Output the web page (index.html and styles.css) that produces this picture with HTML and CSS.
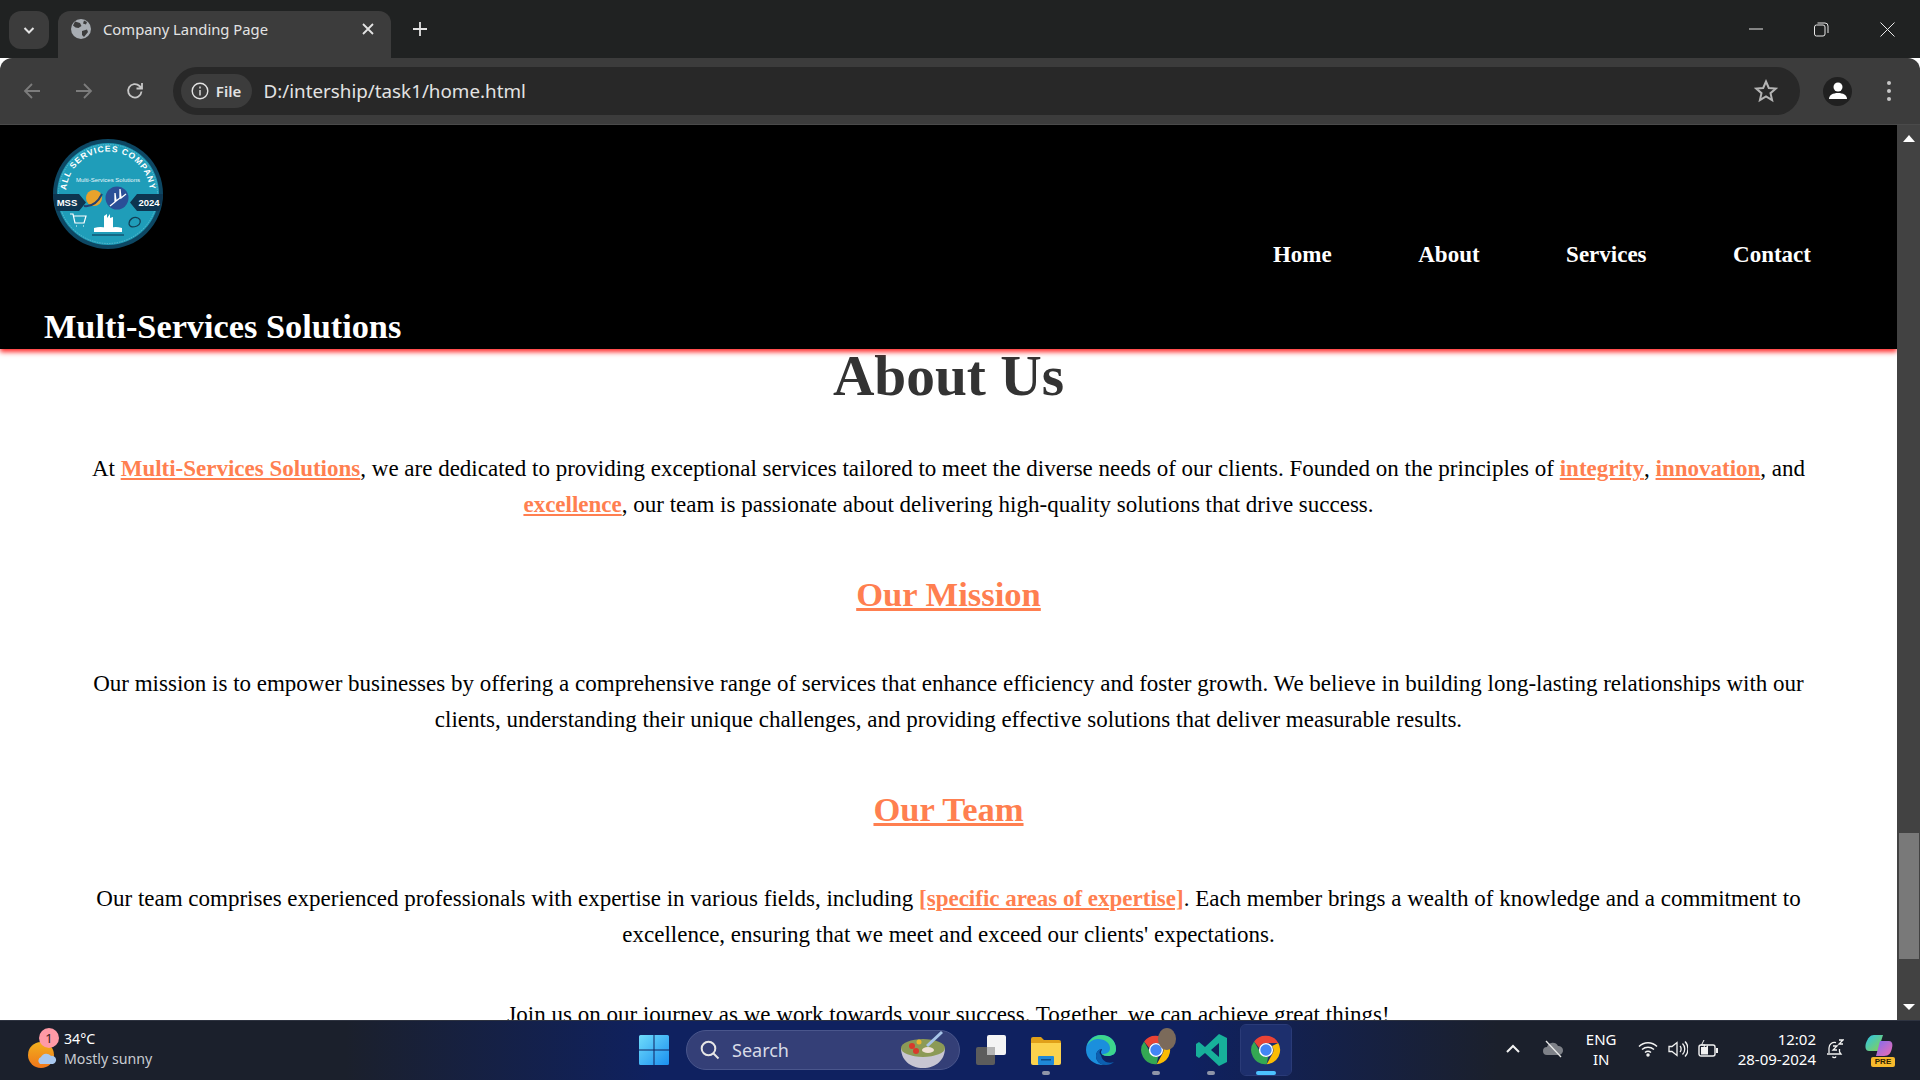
FILE: index.html
```html
<!DOCTYPE html>
<html lang="en">
<head>
  <meta charset="UTF-8">
  <title>Company Landing Page</title>
  <link rel="stylesheet" href="styles.css">
</head>
<body>
  <svg class="defs" width="0" height="0">
    <symbol id="chrome" viewBox="0 0 48 48">
      <path d="M24 4a20 20 0 0 1 17.300 10H24a10 10 0 0 0-9.600 7.200L7.200 12A20 20 0 0 1 24 4z" fill="#ea4335"/>
      <path d="M41.300 14A20 20 0 0 1 25 44l8.300-15A10 10 0 0 0 32.500 18.500z" fill="#fbbc04"/>
      <path d="M7.200 12l8.600 15A10 10 0 0 0 27 33.500L25 44A20 20 0 0 1 7.200 12z" fill="#34a853"/>
      <circle cx="24" cy="24" r="10" fill="#fff"/>
      <circle cx="24" cy="24" r="8" fill="#4285f4"/>
    </symbol>
  </svg>

  <div class="tabstrip">
    <button class="tab-search">
      <svg width="14" height="14" viewBox="0 0 14 14"><path d="M2.500 5l4.500 4.500L11.500 5" fill="none" stroke="#e3e3e3" stroke-width="2"/></svg>
    </button>
    <div class="tab">
      <svg class="tab-globe" width="22" height="22" viewBox="0 0 22 22">
        <circle cx="11" cy="11" r="10" fill="#a8adb3"/>
        <path d="M5 3.500l5 1.500 1.500 3-3 2-3-.5-2.500-2zM12 13l5-1.500 1 2.500-4 5-2-2zM14 2.500l3 1.500-1 2.500-3-1z" fill="#3c3c3c"/>
      </svg>
      <span class="tab-title">Company Landing Page</span>
      <svg class="tab-close" width="12" height="12" viewBox="0 0 12 12"><path d="M1 1l10 10M11 1L1 11" stroke="#e3e3e3" stroke-width="1.800"/></svg>
    </div>
    <svg class="new-tab" width="16" height="16" viewBox="0 0 16 16"><path d="M8 1v14M1 8h14" stroke="#e3e3e3" stroke-width="1.800"/></svg>
    <div class="window-btns">
      <svg width="14" height="14" viewBox="0 0 14 14"><path d="M0 7h14" stroke="#e8e8e8" stroke-width="1"/></svg>
      <svg width="15" height="15" viewBox="0 0 15 15" fill="none" stroke="#e8e8e8"><rect x=".5" y="3" width="10.500" height="11" rx="2"/><path d="M3.500 1h7.500a3 3 0 0 1 3 3v7"/></svg>
      <svg width="15" height="15" viewBox="0 0 15 15"><path d="M.5.500l14 14M14.500.500l-14 14" stroke="#e8e8e8"/></svg>
    </div>
  </div>

  <div class="toolbar">
    <svg width="20" height="20" viewBox="0 0 20 20" fill="none" stroke="#7c7c7c" stroke-width="1.800"><path d="M18 10H3M10 3l-7 7 7 7"/></svg>
    <svg width="20" height="20" viewBox="0 0 20 20" fill="none" stroke="#7c7c7c" stroke-width="1.800"><path d="M2 10h15M10 3l7 7-7 7"/></svg>
    <svg width="20" height="20" viewBox="0 0 20 20" fill="none" stroke="#c7c7c7" stroke-width="1.800"><path d="M16.500 10.500a6.700 6.700 0 1 1-2-5.500l2.500 2.500M17 2v5.500h-5.500"/></svg>
    <div class="omnibox">
      <div class="site-chip">
        <svg width="18" height="18" viewBox="0 0 18 18" fill="none" stroke="#e3e3e3" stroke-width="1.400"><circle cx="9" cy="9" r="7.800"/><path d="M9 8v5.500M9 4.500v2"/></svg>
        <span>File</span>
      </div>
      <span class="url">D:/intership/task1/home.html</span>
      <svg class="star" width="24" height="24" viewBox="0 0 24 24"><path d="M12 2.500l2.800 6.500 7 .6-5.300 4.600 1.600 6.900-6.100-3.700-6.100 3.700 1.600-6.900L2.200 9.600l7-.6z" fill="none" stroke="#b4b4b4" stroke-width="2"/></svg>
    </div>
    <div class="avatar">
      <svg width="20" height="20" viewBox="0 0 20 20" fill="#fff"><circle cx="10" cy="6" r="4.500"/><path d="M1 18c0-4 4-6 9-6s9 2 9 6z"/></svg>
    </div>
    <div class="kebab"><i></i><i></i><i></i></div>
  </div>

  <div class="viewport">
    <div class="page">
      <header class="site-header">
        <div class="brand">
          <svg class="logo" width="112" height="112" viewBox="0 0 112 112">
            <defs><path id="logo-arc" d="M15.300 66A42 42 0 1 1 96.700 66"/></defs>
            <circle cx="56" cy="56" r="55" fill="#0d4763"/>
            <circle cx="56" cy="56" r="51" fill="#1f9db9"/>
            <circle cx="56" cy="56" r="49.500" fill="none" stroke="#8fd0df" stroke-width=".5" stroke-dasharray="1.500 1"/>
            <text class="logo-arc-text"><textPath href="#logo-arc" startOffset="50%" text-anchor="middle">ALL SERVICES COMPANY</textPath></text>
            <text class="logo-small" x="56" y="44" text-anchor="middle">Multi-Services Solutions</text>
            <path d="M1 56h26l7 8.500-7 8.500H5a55 55 0 0 1-4-17zM111 56H85l-7 8.500 7 8.500h22a55 55 0 0 0 4-17z" fill="#0d3550"/>
            <text class="logo-tag" x="15" y="68" text-anchor="middle">MSS</text>
            <text class="logo-tag" x="97" y="68" text-anchor="middle">2024</text>
            <circle cx="42" cy="60" r="8" fill="#e9a22b"/>
            <path d="M32 68c8 1 14-4 18-12" fill="none" stroke="#25406e" stroke-width="2"/>
            <circle cx="65" cy="60" r="11.500" fill="#2a4f97"/>
            <path d="M58 68l5-4V55l1 8 4-3V51l1 9 5-4" fill="none" stroke="#fff" stroke-width="1.300"/>
            <path d="M18 76h3l2 9h9l2-7H22M24 88h1M31 88h1" fill="none" stroke="#fff" stroke-width="1.200"/>
            <path d="M52 92V78l3-2v4l3-4v4l3-1v13zM42 90c6-2 12-1 14 1 3-2 8-3 14-1v4H42z" fill="#fff"/>
            <path d="M40 97h32" stroke="#0d3550"/>
            <path d="M77 86c0-5 5-8 9-6 4 2 2 7-1 8s-7 2-8-2z" fill="none" stroke="#123f55" stroke-width="1.200"/>
          </svg>
          <div class="brand-name">Multi-Services Solutions</div>
        </div>
        <nav class="site-nav">
          <a href="#">Home</a>
          <a href="#">About</a>
          <a href="#">Services</a>
          <a href="#">Contact</a>
        </nav>
      </header>

      <main class="about">
        <h1>About Us</h1>
        <p>At <a href="#">Multi-Services Solutions</a>, we are dedicated to providing exceptional services tailored to meet the diverse needs of our clients. Founded on the principles of <a href="#">integrity</a>, <a href="#">innovation</a>, and <a href="#">excellence</a>, our team is passionate about delivering high-quality solutions that drive success.</p>
        <h2><a href="#">Our Mission</a></h2>
        <p>Our mission is to empower businesses by offering a comprehensive range of services that enhance efficiency and foster growth. We believe in building long-lasting relationships with our clients, understanding their unique challenges, and providing effective solutions that deliver measurable results.</p>
        <h2><a href="#">Our Team</a></h2>
        <p>Our team comprises experienced professionals with expertise in various fields, including <a href="#">[specific areas of expertise]</a>. Each member brings a wealth of knowledge and a commitment to excellence, ensuring that we meet and exceed our clients' expectations.</p>
        <p>Join us on our journey as we work towards your success. Together, we can achieve great things!</p>
      </main>
    </div>

    <div class="scrollbar">
      <svg width="14" height="8" viewBox="0 0 14 8"><path d="M7 0l6 7H1z" fill="#fff"/></svg>
      <div class="scroll-track"><div class="scroll-thumb"></div></div>
      <svg width="14" height="8" viewBox="0 0 14 8"><path d="M1 1h12L7 7z" fill="#fff"/></svg>
    </div>
  </div>

  <div class="taskbar">
    <div class="weather">
      <div class="weather-icon">
        <svg width="32" height="32" viewBox="0 0 32 32">
          <defs><linearGradient id="sun" x1="0" y1="0" x2="0" y2="1"><stop offset="0" stop-color="#f2b01e"/><stop offset="1" stop-color="#f0761a"/></linearGradient></defs>
          <circle cx="14" cy="18" r="13" fill="url(#sun)"/>
          <path d="M13 27a4 4 0 0 1 1-7 6 6 0 0 1 10-1 4 4 0 0 1 2 8z" fill="#a9c8ef"/>
        </svg>
        <span class="weather-badge">1</span>
      </div>
      <div class="weather-text">
        <span class="temp">34°C</span>
        <span class="cond">Mostly sunny</span>
      </div>
    </div>

    <div class="task-center">
      <svg class="win" width="30" height="30" viewBox="0 0 30 30">
        <defs><linearGradient id="win" x1="0" y1="0" x2="1" y2="1"><stop offset="0" stop-color="#6fdcfb"/><stop offset="1" stop-color="#1a8fef"/></linearGradient></defs>
        <path d="M0 1.500A1.500 1.500 0 0 1 1.500 0h13v14.500H0zM15.500 0h13A1.500 1.500 0 0 1 30 1.500v13H15.500zM0 15.500h14.500V30h-13A1.500 1.500 0 0 1 0 28.500zM15.500 15.500H30v13a1.500 1.500 0 0 1-1.500 1.500h-13z" fill="url(#win)"/>
      </svg>
      <div class="task-search">
        <svg width="20" height="20" viewBox="0 0 20 20" fill="none" stroke="#e6e6e6" stroke-width="2"><circle cx="8.500" cy="8.500" r="6.800"/><path d="M13.500 13.500l5 5"/></svg>
        <span>Search</span>
        <svg class="bowl" width="46" height="40" viewBox="0 0 46 40">
          <path d="M1 18h44c0 12-9 20-22 20S1 30 1 18z" fill="#c8c6d2"/>
          <ellipse cx="23" cy="18" rx="22" ry="9" fill="#8c9a56"/>
          <circle cx="12" cy="16" r="3" fill="#d8392b"/><circle cx="19" cy="12" r="2.500" fill="#e8b530"/><circle cx="16" cy="21" r="3" fill="#d8392b"/><ellipse cx="28" cy="20" rx="6" ry="3" fill="#eedfd3"/>
          <path d="M27 16L42 2" stroke="#a8c4e8" stroke-width="3"/>
        </svg>
      </div>
      <div class="task-slot">
        <svg width="32" height="32" viewBox="0 0 32 32">
          <rect x="1" y="13" width="19" height="18" rx="2" fill="#5c5c5c"/>
          <rect x="12" y="1" width="19" height="20" rx="2" fill="#f4f4f4"/>
          <rect x="12" y="13" width="8" height="8" fill="#b5b5b5"/>
        </svg>
      </div>
      <div class="task-slot open">
        <svg width="30" height="30" viewBox="0 0 30 30">
          <path d="M0 4a2 2 0 0 1 2-2h8l3 3h15a2 2 0 0 1 2 2v4H0z" fill="#e0a019"/>
          <path d="M0 8h30v20a2 2 0 0 1-2 2H2a2 2 0 0 1-2-2z" fill="#fbd24d"/>
          <rect x="7" y="21" width="16" height="9" rx="1" fill="#1f88d8"/>
          <rect x="10" y="24" width="10" height="1.500" fill="#0c4d8a"/>
        </svg>
      </div>
      <div class="task-slot">
        <svg width="30" height="32" viewBox="0 0 30 32">
          <path d="M15 1C24 1 30 7 30 15c0 5-4 7-8 7-5 0-7-2-7-4 0-1 1-2 1-3-3 0-6 3-6 7 0 5 4 9 10 9C9 32 0 25 0 16 0 7 7 1 15 1z" fill="#1b8fdd"/>
          <path d="M15 1C24 1 30 7 30 15c0 5-4 7-8 7-3 0-5-1-6-2 5 0 8-2 8-6 0-5-5-9-12-9-5 0-9 3-11 7C3 6 8 1 15 1z" fill="#3dd68c"/>
          <path d="M10 22c0 5 4 9 10 9 3 0 6-1 8-3-5 2-12 0-13-7-2-2-2-4 1-6-3 0-6 3-6 7z" fill="#0c5fb0"/>
        </svg>
      </div>
      <div class="task-slot open">
        <svg width="34" height="34"><use href="#chrome"/></svg>
        <span class="chrome-face"></span>
      </div>
      <div class="task-slot open">
        <svg width="31" height="32" viewBox="0 0 31 32">
          <path d="M23 0l8 4v24l-8 4-14-13-6 5-3-2V10l3-2 6 5zM23 9l-8 7 8 7z" fill="#17b09a"/>
        </svg>
      </div>
      <div class="task-slot active">
        <svg width="34" height="34"><use href="#chrome"/></svg>
      </div>
    </div>

    <div class="tray">
      <svg width="16" height="10" viewBox="0 0 16 10"><path d="M2 8l6-6 6 6" fill="none" stroke="#f2f2f2" stroke-width="2"/></svg>
      <svg class="tray-cloud" width="22" height="18" viewBox="0 0 22 18">
        <path d="M5 15a4 4 0 0 1 0-8 6 6 0 0 1 11-1 4.500 4.500 0 0 1 1 9z" fill="#7e8188"/>
        <path d="M4 1l15 16" stroke="#e9e9e9" stroke-width="1.300"/>
      </svg>
      <div class="tray-lang"><span>ENG</span><span>IN</span></div>
      <div class="tray-icons">
        <svg width="20" height="16" viewBox="0 0 20 16" fill="none" stroke="#f2f2f2" stroke-width="1.500"><path d="M1 5.500c5-5 13-5 18 0M4 8.500c3.500-3 8.500-3 12 0M7 11.500c1.800-1.500 4.200-1.500 6 0"/><circle cx="10" cy="14" r="1" fill="#f2f2f2"/></svg>
        <svg width="20" height="18" viewBox="0 0 20 18" fill="none" stroke="#f2f2f2" stroke-width="1.300"><path d="M1 6.500h3l5-4v13l-5-4H1zM12 6c1.500 1.500 1.500 4.500 0 6M14.500 3.500c3 3 3 8 0 11M17 1.500c4 4 4 11 0 15"/></svg>
        <svg width="20" height="18" viewBox="0 0 20 18"><rect x="1" y="5" width="16" height="11" rx="2" fill="none" stroke="#f2f2f2" stroke-width="1.400"/><path d="M3 14.500V7h5l2-2v9.500z" fill="#f2f2f2"/><path d="M6 0L3.500 5H7L5 9" fill="none" stroke="#f2f2f2"/><rect x="18" y="8" width="2" height="5" fill="#f2f2f2"/></svg>
      </div>
      <div class="tray-clock"><span>12:02</span><span>28-09-2024</span></div>
      <svg width="18" height="20" viewBox="0 0 18 20" fill="none" stroke="#f2f2f2" stroke-width="1.300"><path d="M3 14V9a5.500 5.500 0 0 1 7-5.300M1 15h14l-1.500-2V10M6.500 17.500c.5 1.500 3 1.500 3.500 0"/><path d="M7 7h4l-4 4h4M13 1h4l-4 4h4"/></svg>
      <div class="copilot">
        <svg width="28" height="24" viewBox="0 0 28 24">
          <defs>
            <linearGradient id="cop-a" x1="0" y1="0" x2="1" y2="1"><stop offset="0" stop-color="#2bc4ea"/><stop offset="1" stop-color="#8cd14a"/></linearGradient>
            <linearGradient id="cop-b" x1="0" y1="0" x2="1" y2="1"><stop offset="0" stop-color="#7f6df0"/><stop offset="1" stop-color="#f06bb0"/></linearGradient>
          </defs>
          <path d="M9 1h9l-5 16H4C0 17 0 12 1 9c2-5 4-8 8-8z" fill="url(#cop-a)"/>
          <path d="M15 7h9c3 0 4 3 3 7-1 5-3 8-8 8h-8z" fill="url(#cop-b)"/>
        </svg>
        <span class="pre">PRE</span>
      </div>
    </div>
  </div>
</body>
</html>
```

FILE: styles.css
```css
* {
  box-sizing: border-box;
}
html, body {
  margin: 0;
  height: 100%;
  overflow: hidden;
}
body {
  display: flex;
  flex-direction: column;
  font-family: "Noto Sans", sans-serif;
  background: #fff;
}
.defs {
  position: absolute;
}

/* browser chrome */
.tabstrip {
  height: 58px;
  flex: none;
  display: flex;
  align-items: flex-start;
  background: #202222;
  padding: 11px 0 0 9px;
}
.tab-search {
  width: 40px;
  height: 38px;
  padding: 0;
  border: none;
  border-radius: 12px;
  background: #3c3c3c;
  display: flex;
  align-items: center;
  justify-content: center;
}
.tab {
  width: 333px;
  height: 47px;
  margin-left: 9px;
  padding: 0 17px 11px 12px;
  display: flex;
  align-items: center;
  background: #3c3c3c;
  border-radius: 12px 12px 0 0;
}
.tab-globe {
  margin-right: 11px;
}
.tab-title {
  flex: 1;
  font-size: 14.800px;
  color: #e3e3e3;
}
.new-tab {
  margin: 10px 0 0 21px;
}
.window-btns {
  margin-left: auto;
  display: flex;
  gap: 51px;
  padding: 11px 25px 0 0;
}
.toolbar {
  height: 67px;
  flex: none;
  display: flex;
  align-items: center;
  gap: 31.500px;
  padding: 0 0 0 22px;
  background: #3c3c3c;
  border-radius: 12px 12px 0 0;
  border-bottom: 1px solid #4a4a4a;
}
.omnibox {
  width: 1627px;
  height: 48px;
  margin-left: -4px;
  padding: 0 22px 0 8px;
  display: flex;
  align-items: center;
  background: #282828;
  border-radius: 24px;
}
.site-chip {
  height: 34px;
  width: 71px;
  display: flex;
  align-items: center;
  justify-content: center;
  gap: 7px;
  background: #3c3c3c;
  border-radius: 17px;
  color: #e3e3e3;
  font-size: 15px;
  font-weight: 600;
}
.url {
  margin-left: 12px;
  font-size: 18.800px;
  color: #e3e3e3;
}
.star {
  margin-left: auto;
}
.avatar {
  width: 29px;
  height: 29px;
  margin-left: -8px;
  display: flex;
  align-items: center;
  justify-content: center;
  background: #202020;
  border-radius: 50%;
}
.kebab {
  margin-left: 3px;
  display: flex;
  flex-direction: column;
  gap: 4px;
}
.kebab i {
  width: 4px;
  height: 4px;
  border-radius: 50%;
  background: #c7c7c7;
}

/* page area */
.viewport {
  flex: 1;
  min-height: 0;
  display: flex;
}
.page {
  flex: 1;
  min-width: 0;
  overflow: hidden;
  font-family: "Liberation Serif", "Times New Roman", serif;
}
.site-header {
  position: relative;
  z-index: 2;
  height: 224px;
  display: flex;
  justify-content: space-between;
  padding: 13px 86px 0 44px;
  background: #000;
  box-shadow: 0 3px 5px #ff2a2a;
}
.logo {
  display: block;
  margin-left: 8px;
}
.brand-name {
  margin-top: 57px;
  font-size: 34.300px;
  font-weight: bold;
  color: #fff;
}
.logo-arc-text {
  font: bold 8.500px "Liberation Sans", sans-serif;
  letter-spacing: .9px;
  fill: #fff;
}
.logo-small {
  font: 6px "Liberation Sans", sans-serif;
  fill: #e8f6fa;
}
.logo-tag {
  font: bold 9.500px "Liberation Sans", sans-serif;
  fill: #fff;
}
.site-nav {
  display: flex;
  gap: 86.500px;
  margin-top: 104px;
  align-self: flex-start;
}
.site-nav a {
  color: #fff;
  font-size: 23px;
  font-weight: bold;
  text-decoration: none;
}
.about {
  padding: 0 73px;
  text-align: center;
}
.about h1 {
  margin: 0;
  font-size: 57.400px;
  line-height: 54px;
  color: #333;
}
.about p {
  margin: 0;
  font-size: 23px;
  line-height: 36px;
  color: #000;
}
.about h1 + p {
  padding-top: 48px;
}
.about h2 + p {
  padding-top: 52px;
}
.about p + p {
  padding-top: 44px;
}
.about h2 {
  margin: 0;
  padding-top: 51px;
  font-size: 34.560px;
  line-height: 40px;
}
.about a {
  color: #ff7f50;
  font-weight: bold;
}
.scrollbar {
  width: 23px;
  flex: none;
  display: flex;
  flex-direction: column;
  align-items: center;
  padding: 10px 0 9px;
  background: #424242;
}
.scroll-track {
  flex: 1;
  width: 100%;
  padding-top: 690px;
}
.scroll-thumb {
  width: 20px;
  height: 126px;
  margin-left: 2px;
  background: #797979;
}

/* windows taskbar */
.taskbar {
  position: relative;
  height: 60px;
  flex: none;
  display: flex;
  align-items: center;
  justify-content: space-between;
  padding: 0 25px 0 27px;
  border-top: 1px solid #2e3340;
  color: #fff;
  font-family: "Noto Sans", sans-serif;
  background: linear-gradient(90deg, #1b202c 0, #1b202c 18%, #0f2160 34%, #0f2160 62%, #1b202c 78%, #1b202c 100%);
}
.weather {
  width: 260px;
  display: flex;
  align-items: center;
  gap: 5px;
}
.weather-icon {
  position: relative;
  width: 32px;
  height: 32px;
  margin-top: 4px;
}
.weather-badge {
  position: absolute;
  top: -9px;
  left: 12px;
  width: 20px;
  height: 20px;
  border-radius: 50%;
  background: #ff9aa6;
  color: #3a1a20;
  font-size: 13px;
  line-height: 20px;
  text-align: center;
}
.weather-text {
  display: flex;
  flex-direction: column;
  margin-top: -3px;
  font-size: 14.200px;
  line-height: 20px;
}
.cond {
  color: #c9ccd2;
}
.task-center {
  position: absolute;
  left: 639px;
  top: -1px;
  height: 59px;
  display: flex;
  align-items: center;
  gap: 5px;
}
.win {
  margin-right: 12px;
}
.task-search {
  width: 274px;
  height: 40px;
  margin-right: 1px;
  padding: 0 13px 0 13px;
  display: flex;
  align-items: center;
  gap: 12px;
  border: 1px solid #4a568c;
  border-radius: 20px;
  background: #343f77;
  color: #d8dbe6;
  font-size: 18px;
}
.bowl {
  margin-left: auto;
}
.task-slot {
  position: relative;
  width: 50px;
  height: 50px;
  display: flex;
  align-items: center;
  justify-content: center;
  border-radius: 5px;
}
.task-slot.open::after,
.task-slot.active::after {
  content: "";
  position: absolute;
  bottom: 0;
  left: 50%;
  width: 8px;
  height: 4px;
  margin-left: -4px;
  border-radius: 2px;
  background: #8f95a8;
}
.task-slot.active {
  background: #1d2f6d;
  outline: 1px solid #2a3b78;
}
.task-slot.active::after {
  width: 20px;
  margin-left: -10px;
  background: #4cc2ff;
}
.chrome-face {
  position: absolute;
  top: 3px;
  left: 27px;
  width: 18px;
  height: 22px;
  border-radius: 50%;
  background: #7b6a5a;
}
.tray {
  display: flex;
  align-items: center;
  margin-left: auto;
  margin-top: -3px;
  font-size: 15px;
}
.tray-cloud {
  margin-left: 21px;
}
.tray-lang {
  margin-left: 20px;
  width: 34px;
  display: flex;
  flex-direction: column;
  align-items: center;
  line-height: 20px;
}
.tray-icons {
  margin-left: 20px;
  display: flex;
  align-items: center;
  gap: 10px;
}
.tray-clock {
  margin-left: 19.500px;
  display: flex;
  flex-direction: column;
  align-items: flex-end;
  line-height: 20px;
}
.tray-clock + svg {
  margin-left: 10px;
}
.copilot {
  position: relative;
  margin-left: 21px;
  width: 30px;
  height: 30px;
}
.pre {
  position: absolute;
  left: 6px;
  bottom: -3px;
  width: 24px;
  height: 10px;
  border-radius: 2px;
  background: #f7b92c;
  color: #2a2000;
  font: bold 8px/10px "Liberation Sans", sans-serif;
  text-align: center;
}
```
